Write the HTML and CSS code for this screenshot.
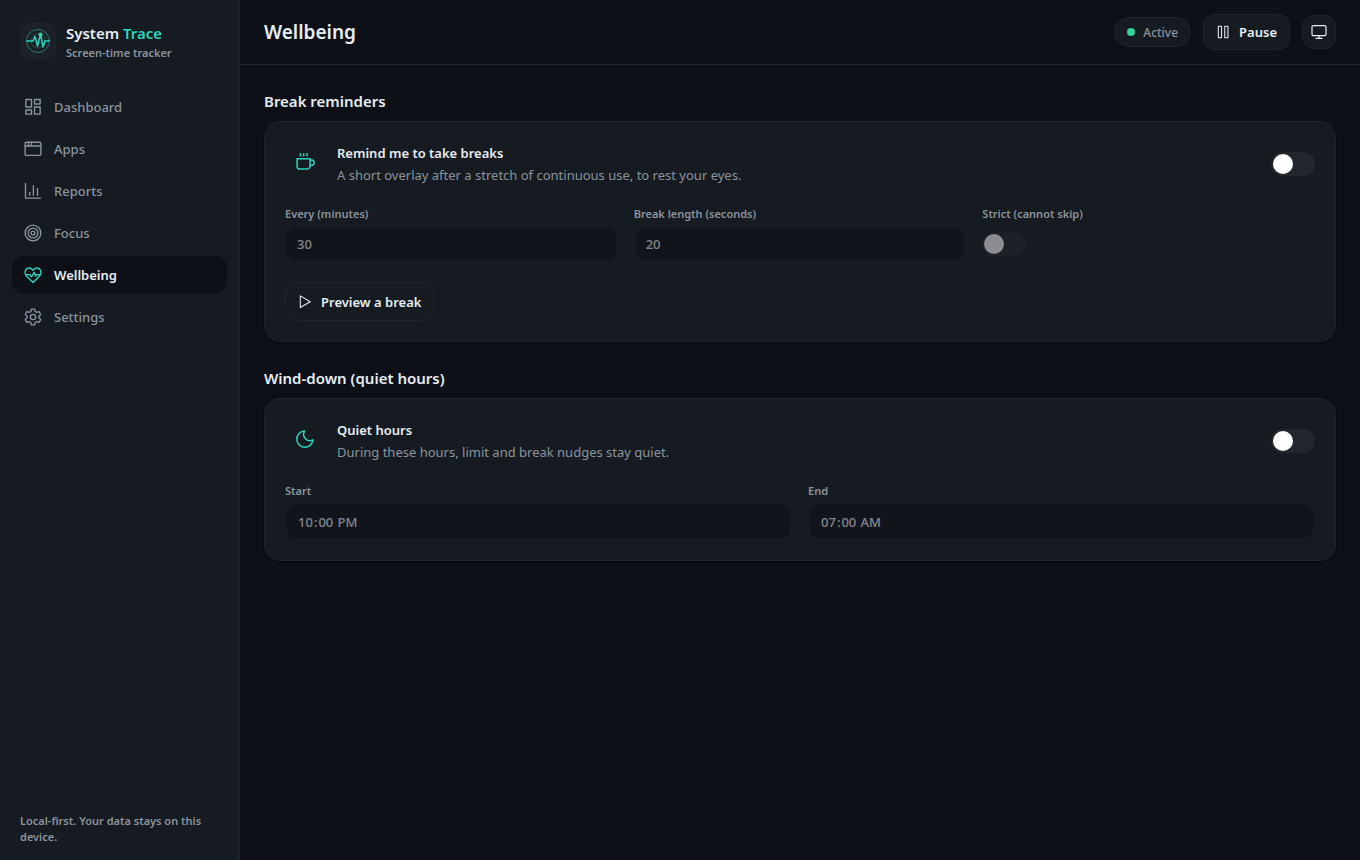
FILE: index.html
```html
<!DOCTYPE html>
<html lang="en">
  <head>
    <meta charset="utf-8">
    <meta name="viewport" content="width=device-width, initial-scale=1">
    <title>System Trace - Wellbeing</title>
    <link rel="stylesheet" href="styles.css">
  </head>
  <body>
    <div class="app">

      <aside class="sidebar">
        <div class="brand">
          <span class="brand-logo">
            <svg width="26" height="26" viewBox="0 0 26 26" fill="none" stroke="#2dd4bf" stroke-linecap="round" stroke-linejoin="round">
              <circle cx="13" cy="13" r="11.500" stroke-opacity=".5"/>
              <circle cx="13" cy="13" r="7" stroke-opacity=".25"/>
              <path d="M2 13h6l2-4.500 2.500 9.500 3-12 2.500 13 2-6h4" stroke-width="1.500"/>
              <circle cx="15.500" cy="6.500" r="2" fill="#34d399" stroke="none"/>
            </svg>
          </span>
          <div>
            <div class="brand-name">System <span class="accent">Trace</span></div>
            <div class="brand-sub">Screen-time tracker</div>
          </div>
        </div>

        <nav class="nav">
          <a class="nav-item" href="#dashboard">
            <svg class="icon" viewBox="0 0 24 24"><rect x="2.500" y="2" width="7.500" height="10"/><rect x="14" y="2" width="7.500" height="6"/><rect x="2.500" y="16" width="7.500" height="5.500"/><rect x="14" y="12" width="7.500" height="9.500"/></svg>
            Dashboard
          </a>
          <a class="nav-item" href="#apps">
            <svg class="icon" viewBox="0 0 24 24"><rect x="1.500" y="3" width="21" height="17.500" rx="1.500"/><path d="M1.500 8h21M6 3v5M10 3v5"/></svg>
            Apps
          </a>
          <a class="nav-item" href="#reports">
            <svg class="icon" viewBox="0 0 24 24"><path d="M2 2v19.500h20M7.500 17.500v-4M12.500 17.500V5M18 17.500V8.500"/></svg>
            Reports
          </a>
          <a class="nav-item" href="#focus">
            <svg class="icon" viewBox="0 0 24 24"><circle cx="12" cy="12" r="10.500"/><circle cx="12" cy="12" r="6.500"/><circle cx="12" cy="12" r="2.500"/></svg>
            Focus
          </a>
          <a class="nav-item active" href="#wellbeing" aria-current="page">
            <svg class="icon" viewBox="0 0 24 24"><path d="M12 22 3 13C.5 10 1 5.500 4 3.500 7 1.800 10.500 3 12 6c1.500-3 5-4.200 8-2.500 3 2 3.500 6.500 1 9.500z"/><path d="M2.500 11.500H8l2 3 3.500-6 2 5 1.500-2h4.500"/></svg>
            Wellbeing
          </a>
          <a class="nav-item" href="#settings">
            <svg class="icon" viewBox="0 0 24 24"><circle cx="12" cy="12" r="3.500"/><path d="M9.800 1.500h4.400l.7 3.200 2 1.200 3.200-1 2.200 3.800-2.500 2.200v2.200l2.500 2.200-2.200 3.800-3.200-1-2 1.200-.7 3.200H9.800l-.7-3.200-2-1.200-3.200 1-2.200-3.800 2.500-2.200v-2.200L1.700 8.700l2.200-3.800 3.200 1 2-1.200z"/></svg>
            Settings
          </a>
        </nav>

        <p class="sidebar-note">Local-first. Your data stays on this device.</p>
      </aside>

      <div class="content">
        <header class="topbar">
          <h1>Wellbeing</h1>
          <span class="status"><span class="status-dot"></span>Active</span>
          <button type="button" class="btn btn-pause">
            <svg class="icon icon-sm" viewBox="0 0 24 24"><rect x="4" y="2" width="5.500" height="20"/><rect x="15" y="2" width="5.500" height="20"/></svg>
            Pause
          </button>
          <button type="button" class="btn btn-icon" aria-label="Theme">
            <svg class="icon icon-md" viewBox="0 0 24 24"><rect x="1.500" y="2.500" width="21" height="15" rx="2"/><path d="M12 17.500v4M7.500 21.500h9"/></svg>
          </button>
        </header>

        <main class="page">
          <section>
            <h2>Break reminders</h2>
            <div class="card">
              <div class="row">
                <span class="row-icon">
                  <svg class="icon icon-lg" viewBox="0 0 24 24"><path d="M2.500 8h15.500v9a3.500 3.500 0 0 1-3.500 3.500H6A3.500 3.500 0 0 1 2.500 17zM18 9.500h1.700a2.800 2.800 0 0 1 0 6.500H18M6.500 2v2.500M10.500 2v2.500M14.500 2v2.500"/></svg>
                </span>
                <div class="row-text">
                  <label class="row-title" for="breaks">Remind me to take breaks</label>
                  <p>A short overlay after a stretch of continuous use, to rest your eyes.</p>
                </div>
                <input class="toggle" type="checkbox" role="switch" id="breaks">
              </div>
              <div class="fields fields-3">
                <div class="field">
                  <label for="every">Every (minutes)</label>
                  <input class="input" type="number" id="every" value="30" disabled>
                </div>
                <div class="field">
                  <label for="length">Break length (seconds)</label>
                  <input class="input" type="number" id="length" value="20" disabled>
                </div>
                <div class="field">
                  <label for="strict">Strict (cannot skip)</label>
                  <div class="toggle-wrap"><input class="toggle" type="checkbox" role="switch" id="strict" disabled></div>
                </div>
              </div>
              <button type="button" class="btn btn-preview">
                <svg class="icon icon-sm" viewBox="0 0 24 24"><path d="M4 1.500v20L21 11.500z"/></svg>
                Preview a break
              </button>
            </div>
          </section>

          <section>
            <h2>Wind-down (quiet hours)</h2>
            <div class="card">
              <div class="row">
                <span class="row-icon">
                  <svg class="icon icon-lg" viewBox="0 0 24 24"><path d="M11.500 2.500A9.700 9.700 0 1 0 21.500 13 7.500 7.500 0 0 1 11.500 2.500z"/></svg>
                </span>
                <div class="row-text">
                  <label class="row-title" for="quiet">Quiet hours</label>
                  <p>During these hours, limit and break nudges stay quiet.</p>
                </div>
                <input class="toggle" type="checkbox" role="switch" id="quiet">
              </div>
              <div class="fields fields-2">
                <div class="field">
                  <label for="start">Start</label>
                  <input class="input input-time" type="time" id="start" value="22:00" disabled>
                </div>
                <div class="field">
                  <label for="end">End</label>
                  <input class="input input-time" type="time" id="end" value="07:00" disabled>
                </div>
              </div>
            </div>
          </section>
        </main>
      </div>

    </div>
  </body>
</html>
```
FILE: styles.css
```css
:root {
  --bg: #0d1017;
  --surface: #161b21;
  --border: #1e2429;
  --text: #e6edf3;
  --muted: #8b949e;
  --accent: #2dd4bf;
}
* {
  box-sizing: border-box;
}
body {
  margin: 0;
  background: var(--bg);
  color: var(--text);
  font-family: "Segoe UI", "Noto Sans", "Open Sans", sans-serif;
  font-size: 13px;
}
h1, h2, p {
  margin: 0;
}
button, input {
  font-family: inherit;
}
.app {
  display: flex;
  min-height: 100vh;
}

/* sidebar */
.sidebar {
  display: flex;
  flex-direction: column;
  flex: 0 0 240px;
  padding: 20px 12px 15px;
  background: var(--surface);
  border-right: 1px solid var(--border);
}
.brand {
  display: flex;
  align-items: center;
  gap: 10px;
  padding: 0 8px;
  margin-bottom: 26px;
}
.brand-logo {
  display: flex;
  align-items: center;
  justify-content: center;
  width: 36px;
  height: 36px;
  border-radius: 10px;
  background: #1b2126;
  border: 1px solid var(--border);
}
.brand-name {
  padding-top: 2px;
  font-size: 15px;
  line-height: 22px;
  font-weight: 600;
}
.accent {
  color: var(--accent);
}
.brand-sub {
  font-size: 11px;
  line-height: 18px;
  font-weight: 600;
  color: var(--muted);
}
.nav {
  display: flex;
  flex-direction: column;
  gap: 4px;
}
.nav-item {
  display: flex;
  align-items: center;
  gap: 12px;
  height: 38px;
  padding: 0 12px;
  border-radius: 12px;
  font-weight: 500;
  color: var(--muted);
  text-decoration: none;
}
.nav-item.active {
  background: var(--bg);
  color: var(--text);
  font-weight: 600;
}
.nav-item.active .icon {
  color: var(--accent);
}
.sidebar-note {
  margin-top: auto;
  padding: 0 8px;
  font-size: 11px;
  line-height: 16px;
  font-weight: 600;
  color: var(--muted);
}

.icon {
  width: 18px;
  height: 18px;
  flex: none;
  fill: none;
  stroke: currentColor;
  stroke-width: 1.8;
  stroke-linecap: round;
  stroke-linejoin: round;
}
.icon-sm {
  width: 14px;
  height: 14px;
}
.icon-md {
  width: 16px;
  height: 16px;
}
.icon-lg {
  width: 20px;
  height: 20px;
}

/* top bar */
.content {
  flex: 1;
  min-width: 0;
}
.topbar {
  display: flex;
  align-items: center;
  gap: 12px;
  height: 65px;
  padding: 0 24px;
  border-bottom: 1px solid var(--border);
}
h1 {
  margin-right: auto;
  font-size: 19px;
  font-weight: 600;
}
.status {
  display: flex;
  align-items: center;
  gap: 8px;
  height: 30px;
  padding: 0 12px;
  border: 1px solid var(--border);
  border-radius: 15px;
  background: var(--surface);
  font-size: 12px;
  font-weight: 500;
  color: var(--muted);
}
.status-dot {
  width: 8px;
  height: 8px;
  border-radius: 50%;
  background: #34d399;
}
.btn {
  display: inline-flex;
  align-items: center;
  justify-content: center;
  gap: 9px;
  padding: 0 12px;
  border: 1px solid var(--border);
  border-radius: 12px;
  background: var(--surface);
  color: var(--text);
  font-size: 13px;
  font-weight: 600;
  cursor: pointer;
}
.btn-pause {
  height: 36px;
}
.btn-icon {
  width: 34px;
  height: 34px;
  padding: 0;
}
.btn-preview {
  height: 39px;
}

/* page */
.page {
  display: flex;
  flex-direction: column;
  gap: 24px;
  padding: 24px;
}
h2 {
  margin-bottom: 8px;
  font-size: 15px;
  line-height: 24px;
  font-weight: 600;
}
.card {
  display: flex;
  flex-direction: column;
  align-items: flex-start;
  gap: 20px;
  padding: 20px;
  border: 1px solid var(--border);
  border-radius: 16px;
  background: var(--surface);
  box-shadow: 0 1px 3px rgba(0, 0, 0, 0.4);
}
.row {
  display: flex;
  align-items: center;
  gap: 12px;
  width: 100%;
}
.row-icon {
  display: flex;
  align-items: center;
  justify-content: center;
  align-self: flex-start;
  width: 40px;
  height: 40px;
  color: var(--accent);
}
.row-text {
  flex: 1;
}
.row-title {
  display: block;
  line-height: 22px;
  font-weight: 600;
}
.row-text p {
  line-height: 22px;
  color: var(--muted);
}
.fields {
  display: grid;
  gap: 16px;
  width: 100%;
}
.fields-3 {
  grid-template-columns: repeat(3, 1fr);
}
.fields-2 {
  grid-template-columns: repeat(2, 1fr);
}
.field {
  display: flex;
  flex-direction: column;
  gap: 4px;
}
.field label {
  font-size: 11px;
  line-height: 16px;
  font-weight: 600;
  color: var(--muted);
}
.input {
  width: 100%;
  height: 36px;
  padding: 0 11px;
  border: 1px solid var(--border);
  border-radius: 12px;
  background: var(--bg);
  color: var(--text);
  font-size: 13px;
  font-weight: 500;
}
.input-time {
  height: 37px;
}
.input-time::-webkit-calendar-picker-indicator {
  display: none;
}
.input:disabled {
  opacity: 0.5;
}
.toggle-wrap {
  display: flex;
  align-items: center;
  height: 36px;
}
.toggle {
  appearance: none;
  width: 44px;
  height: 24px;
  margin: 0;
  padding: 2px;
  border-radius: 12px;
  background: #21272c;
  cursor: pointer;
}
.toggle::before {
  content: "";
  display: block;
  width: 20px;
  height: 20px;
  border-radius: 50%;
  background: #fff;
}
.toggle:checked {
  background: var(--accent);
}
.toggle:checked::before {
  margin-left: 20px;
}
.toggle:disabled {
  opacity: 0.5;
}
```
